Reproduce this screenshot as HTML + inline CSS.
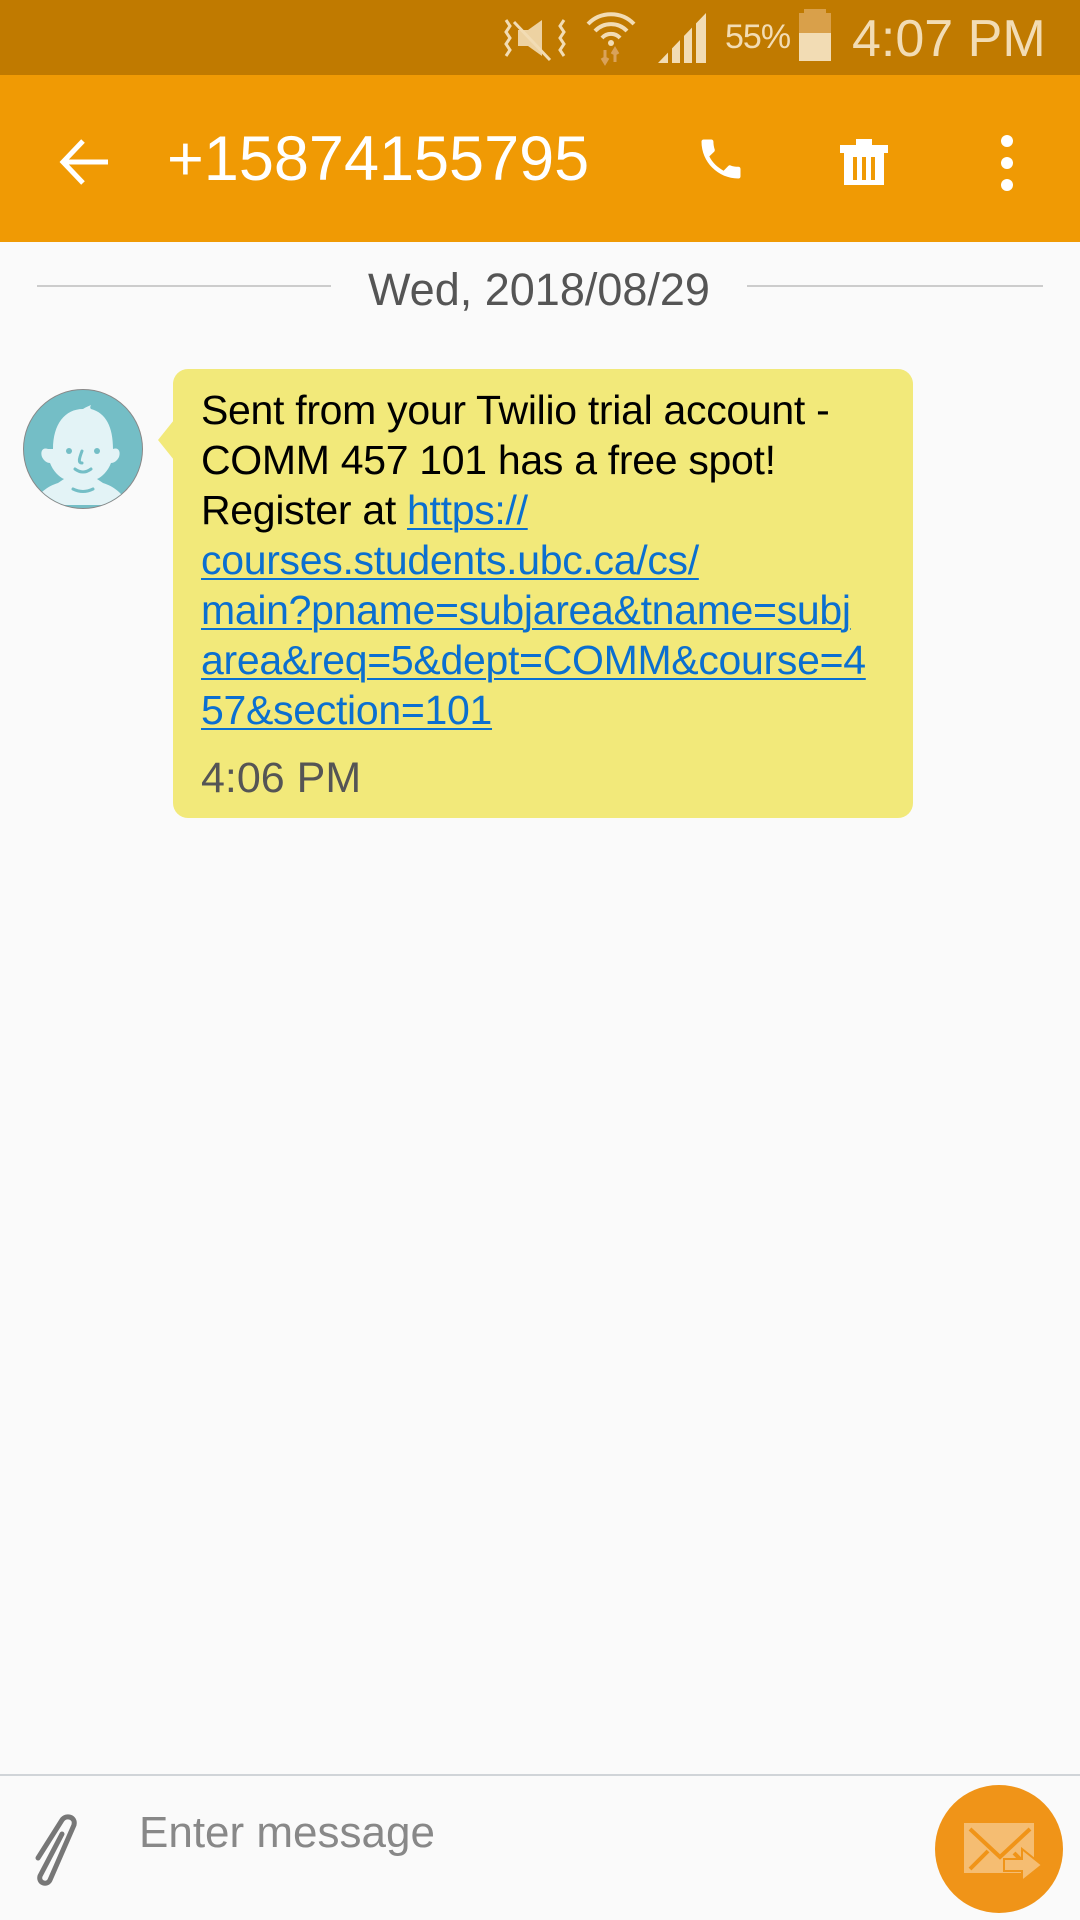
<!DOCTYPE html>
<html><head><meta charset="utf-8">
<style>
*{margin:0;padding:0;box-sizing:border-box}
body{width:1080px;height:1920px;background:#fafafa;font-family:"Liberation Sans",sans-serif;position:relative;overflow:hidden}
.sb{position:absolute;left:0;top:0;width:1080px;height:75px;background:#c07a00}
.hd{position:absolute;left:0;top:75px;width:1080px;height:167px;background:#f09a04}
.abs{position:absolute}
.bubble{position:absolute;left:173px;top:369px;width:740px;height:449px;background:#f2e97a;border-radius:15px}
.txt{position:absolute;left:201px;top:385px;font-size:41px;line-height:50px;color:#000;white-space:nowrap;letter-spacing:-0.3px}
.txt a{color:#0b6fd0;text-decoration:underline;text-decoration-thickness:2px;text-underline-offset:4px}
</style></head><body>
<div class="sb">
  <svg class="abs" style="left:500px;top:16px" width="72" height="46" viewBox="0 0 72 46">
    <g fill="none" stroke="#f2dcb4" stroke-width="3">
      <path d="M6 4 l4 6 -4 6 4 6 -4 6 4 6 -4 6"/><path d="M64 4 l-4 6 4 6 -4 6 4 6 -4 6 4 6"/>
      <path d="M14 6 L50 44"/>
    </g>
    <path d="M18 14 h10 l14 -10 v36 l-14 -10 h-10z" fill="#f2dcb4" opacity=".9"/>
  </svg>
  <svg class="abs" style="left:585px;top:10px" width="52" height="56" viewBox="0 0 52 56">
    <g fill="none" stroke="#f2dcb4" stroke-width="4"><path d="M3 14a32 32 0 0 1 46 0"/><path d="M10 21a22 22 0 0 1 32 0"/><path d="M17 28a12 12 0 0 1 18 0"/></g>
    <circle cx="26" cy="33" r="3" fill="#f2dcb4"/>
    <path d="M20 40v12M17 48l3 5 3-5M30 52v-12M27 44l3-5 3 5" stroke="#d9a25a" stroke-width="3" fill="none"/>
  </svg>
  <svg class="abs" style="left:658px;top:13px" width="48" height="50" viewBox="0 0 48 50"><path d="M0 50 L48 0 V50Z" fill="#f2dcb4"/><g stroke="#c07a00" stroke-width="4"><path d="M12 20v30M24 8v42M36 0v50"/></g></svg>
  <div class="abs" style="left:725px;top:18px;font-size:34px;color:#f2dcb4;letter-spacing:-1px">55%</div>
  <div class="abs" style="left:799px;top:13px;width:32px;height:48px;background:#f2dcb4"><div style="height:20px;background:#d9a04a"></div></div>
  <div class="abs" style="left:804px;top:9px;width:22px;height:6px;background:#d9a04a"></div>
  <div class="abs" style="left:852px;top:9px;font-size:52px;color:#f2dcb4">4:07 PM</div>
</div>
<div class="hd">
  <svg class="abs" style="left:58px;top:62px" width="52" height="50" viewBox="0 0 52 50"><path d="M50 25H6M25 4L5 25l20 21" stroke="#fff" stroke-width="5" fill="none"/></svg>
  <div class="abs" style="left:167px;top:48px;font-size:63px;color:#fff">+15874155795</div>
  <svg class="abs" style="left:695px;top:58px" width="52" height="52" viewBox="0 0 24 24"><path fill="#fff" d="M6.6 10.8c1.4 2.8 3.8 5.1 6.6 6.6l2.2-2.2c.3-.3.7-.4 1-.2 1.1.4 2.3.6 3.6.6.6 0 1 .4 1 1V20c0 .6-.4 1-1 1C10.6 21 3 13.4 3 4c0-.6.4-1 1-1h3.5c.6 0 1 .4 1 1 0 1.3.2 2.5.6 3.6.1.3 0 .7-.2 1L6.6 10.8z"/></svg>
  <svg class="abs" style="left:838px;top:60px" width="52" height="52" viewBox="0 0 52 52"><path fill="#fff" d="M2 10h48v8H2zM18 4h16v7H18zM6 18h40v32H6z"/><path d="M17 22v23M26 22v23M35 22v23" stroke="#f09a04" stroke-width="4"/></svg>
  <svg class="abs" style="left:997px;top:58px" width="20" height="60" viewBox="0 0 20 60"><circle cx="10" cy="8" r="6" fill="#fff"/><circle cx="10" cy="30" r="6" fill="#fff"/><circle cx="10" cy="52" r="6" fill="#fff"/></svg>
</div>
<div class="abs" style="left:37px;top:285px;width:294px;height:2px;background:#ccc"></div>
<div class="abs" style="left:747px;top:285px;width:296px;height:2px;background:#ccc"></div>
<div class="abs" style="left:331px;top:264px;width:416px;text-align:center;font-size:45px;color:#555">Wed, 2018/08/29</div>
<svg class="abs" style="left:23px;top:389px" width="122" height="122" viewBox="0 0 122 122">
  <defs><clipPath id="c"><circle cx="60" cy="60" r="59"/></clipPath></defs>
  <circle cx="60" cy="60" r="59.5" fill="#74bec6" stroke="#888" stroke-width="1"/>
  <g clip-path="url(#c)" fill="#e3f3f6">
    <path d="M30 60c0-25 12-40 30-40 3-2 6-3 8-4-1 2-1 3 0 4 15 4 22 18 22 40 5-2 8 2 6 8-2 4-5 6-8 6-3 8-9 14-14 16l6 4c10 3 20 10 25 22H10c5-12 15-19 25-22l6-4c-5-2-11-8-14-16-3 0-6-2-8-6-2-6 1-10 6-8z"/>
  </g>
  <g fill="none" stroke="#74bec6" stroke-width="3" stroke-linecap="round"><path d="M59 62c-3 8-4 12 0 12"/><path d="M52 80q8 6 16 0"/><path d="M50 100q10 5 20 0"/></g>
  <circle cx="46" cy="62" r="3" fill="#74bec6"/><circle cx="74" cy="62" r="3" fill="#74bec6"/>
</svg>
<svg class="abs" style="left:156px;top:420px" width="20" height="40" viewBox="0 0 20 40"><path d="M18 0L2 20 18 40z" fill="#f2e97a"/></svg>
<div class="bubble"></div>
<div class="txt">Sent from your Twilio trial account -<br>COMM 457 101 has a free spot!<br>Register at <a>https://</a><br><a>courses.students.ubc.ca/cs/</a><br><a>main?pname=subjarea&amp;tname=subj</a><br><a>area&amp;req=5&amp;dept=COMM&amp;course=4</a><br><a>57&amp;section=101</a></div>
<div class="abs" style="left:201px;top:754px;font-size:43px;color:#555">4:06 PM</div>
<div class="abs" style="left:0;top:1774px;width:1080px;height:2px;background:#d0d4d8"></div>
<svg class="abs" style="left:32px;top:1812px" width="68" height="76" viewBox="0 0 68 76"><path d="M6 46L30 8c4-6 14-3 12 5L18 68c-3 6-12 3-10-4L30 22" fill="none" stroke="#777" stroke-width="5" stroke-linecap="round"/></svg>
<div class="abs" style="left:139px;top:1808px;font-size:44px;color:#888">Enter message</div>
<div class="abs" style="left:935px;top:1785px;width:128px;height:128px;border-radius:50%;background:#f09418"></div>
<svg class="abs" style="left:964px;top:1823px" width="82" height="60" viewBox="0 0 82 60">
  <rect x="0" y="0" width="70" height="50" fill="#f5bd72"/>
  <path d="M6 6l30 28 30-28M6 46l18-18M66 46l-16-16" stroke="#f09418" stroke-width="4" fill="none"/>
  <path d="M40 36h18v-10l20 16-20 16v-10h-18z" fill="#f5bd72" stroke="#f09418" stroke-width="2"/>
</svg>
</body></html>
